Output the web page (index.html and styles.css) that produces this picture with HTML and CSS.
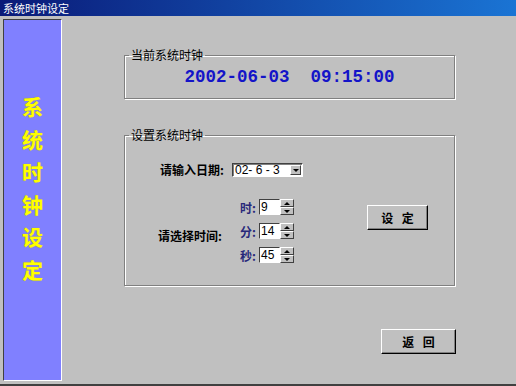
FILE: index.html
```html
<!DOCTYPE html>
<html>
<head>
  <title>系统时钟设定</title>
  <meta charset="UTF-8">
  <link rel="stylesheet" href="styles.css">
</head>
<body>
  <div class="window">
    <div class="titlebar">系统时钟设定</div>
    <div class="main">
      <div class="side">
        <div class="side-title">系<br>统<br>时<br>钟<br>设<br>定</div>
      </div>
      <div class="content">
        <fieldset class="group group-now">
          <legend>当前系统时钟</legend>
          <div class="now">2002-06-03&nbsp;&nbsp;09:15:00</div>
        </fieldset>
        <fieldset class="group group-set">
          <legend>设置系统时钟</legend>
          <div class="date-row">
            <span class="label date-label">请输入日期:</span>
            <div class="combo">
              <span class="combo-text">02-&nbsp;6&nbsp;-&nbsp;3</span>
              <span class="combo-btn"><span class="arrow-down"></span></span>
            </div>
          </div>
          <div class="time-row">
            <span class="label time-label">请选择时间:</span>
            <div class="spins">
              <div class="spin-row">
                <span class="unit">时:</span>
                <span class="spin-input">9</span>
                <span class="spin-btns"><span class="spin-btn"><span class="arrow-up"></span></span><span class="spin-btn"><span class="arrow-down"></span></span></span>
              </div>
              <div class="spin-row">
                <span class="unit">分:</span>
                <span class="spin-input">14</span>
                <span class="spin-btns"><span class="spin-btn"><span class="arrow-up"></span></span><span class="spin-btn"><span class="arrow-down"></span></span></span>
              </div>
              <div class="spin-row">
                <span class="unit">秒:</span>
                <span class="spin-input">45</span>
                <span class="spin-btns"><span class="spin-btn"><span class="arrow-up"></span></span><span class="spin-btn"><span class="arrow-down"></span></span></span>
              </div>
            </div>
            <button class="btn btn-set">设 定</button>
          </div>
        </fieldset>
        <div class="footer">
          <button class="btn btn-back">返 回</button>
        </div>
      </div>
    </div>
  </div>
</body>
</html>
```

FILE: styles.css
```css
body {
  margin: 0;
  font-family: "Noto Sans CJK SC", "DejaVu Sans", sans-serif;
  font-size: 12px;
  background-color: #c0c0c0;
}

.window {
  width: 516px;
  height: 384px;
  background-color: #c0c0c0;
  border-bottom: 2px solid #404040;
  display: flex;
  flex-direction: column;
}

.titlebar {
  height: 16px;
  line-height: 16px;
  padding-left: 3px;
  color: #fff;
  font-size: 11px;
  background: linear-gradient(to right, #0a1a78, #1a74d4);
}

.main {
  display: flex;
  padding: 3px 0 0 3px;
}

.side {
  width: 59px;
  height: 362px;
  box-sizing: border-box;
  background-color: #8080ff;
  border: 1px solid;
  border-color: #404040 #fff #fff #404040;
}

.side-title {
  padding-top: 70px;
  text-align: center;
  color: #ffff00;
  font-size: 21px;
  font-weight: bold;
  line-height: 32.6px;
  text-shadow: 0 0 1px #a0a020;
}

.content {
  padding-left: 62px;
}

.group {
  width: 331px;
  box-sizing: border-box;
  margin: 29px 0 0 0;
  padding: 0;
  border: 1px solid #808080;
  box-shadow: 1px 1px 0 #fff, inset 1px 1px 0 #fff;
}

.group legend {
  margin-left: 4px;
  padding: 0 2px;
  font-size: 12px;
  line-height: 14px;
  color: #000;
}

.group-now {
  padding-bottom: 6px;
}

.now {
  line-height: 30px;
  text-align: center;
  font-family: "Liberation Mono", monospace;
  font-size: 17.5px;
  font-weight: bold;
  color: #1414c8;
}

.group-set {
  padding-bottom: 22px;
}

.label {
  font-weight: bold;
  font-size: 12px;
  line-height: 14px;
  color: #000;
}

.date-row {
  display: flex;
  align-items: center;
  margin-top: 21px;
  padding-left: 35px;
}

.date-label {
  width: 72px;
}

.combo {
  width: 71px;
  height: 14px;
  box-sizing: border-box;
  display: flex;
  align-items: center;
  justify-content: space-between;
  background-color: #fff;
  border: 1px solid;
  border-color: #404040 #fff #fff #404040;
  box-shadow: 1px 1px 0 #808080 inset;
}

.combo-text {
  padding-left: 2px;
  font-family: "Liberation Sans", sans-serif;
  font-size: 12px;
  line-height: 12px;
}

.combo-btn {
  width: 11px;
  height: 10px;
  margin-right: 1px;
  box-sizing: border-box;
  display: flex;
  align-items: center;
  justify-content: center;
  background-color: #c0c0c0;
  border: 1px solid;
  border-color: #fff #404040 #404040 #fff;
}

.arrow-down {
  width: 0;
  height: 0;
  border-left: 3px solid transparent;
  border-right: 3px solid transparent;
  border-top: 3px solid #000;
}

.arrow-up {
  width: 0;
  height: 0;
  border-left: 3px solid transparent;
  border-right: 3px solid transparent;
  border-bottom: 3px solid #000;
}

.time-row {
  display: flex;
  align-items: flex-start;
  margin-top: 22px;
}

.time-label {
  width: 82px;
  margin: 30px 0 0 33px;
}

.spins {
  display: flex;
  flex-direction: column;
  gap: 8px;
}

.spin-row {
  display: flex;
  align-items: center;
  height: 16px;
}

.unit {
  width: 19px;
  font-weight: bold;
  color: #28287a;
}

.spin-input {
  width: 21px;
  height: 16px;
  box-sizing: border-box;
  padding-left: 1px;
  background-color: #fff;
  border: 1px solid;
  border-color: #404040 #fff #fff #404040;
  font-family: "Liberation Sans", sans-serif;
  font-size: 12px;
  line-height: 14px;
}

.spin-btns {
  display: flex;
  flex-direction: column;
  width: 14px;
  height: 16px;
}

.spin-btn {
  height: 8px;
  box-sizing: border-box;
  display: flex;
  align-items: center;
  justify-content: center;
  background-color: #c0c0c0;
  border: 1px solid;
  border-color: #fff #404040 #404040 #fff;
}

.btn {
  box-sizing: border-box;
  padding: 0;
  background-color: #c0c0c0;
  border: 1px solid;
  border-color: #fff #000 #000 #fff;
  box-shadow: inset -1px -1px 0 #808080;
  font-family: "Noto Sans CJK SC", sans-serif;
  font-size: 12px;
  font-weight: bold;
  word-spacing: 6px;
  color: #000;
}

.btn-set {
  width: 61px;
  height: 25px;
  margin: 6px 0 0 73px;
}

.footer {
  margin-top: 43px;
  padding-left: 257px;
}

.btn-back {
  width: 75px;
  height: 25px;
}
```
